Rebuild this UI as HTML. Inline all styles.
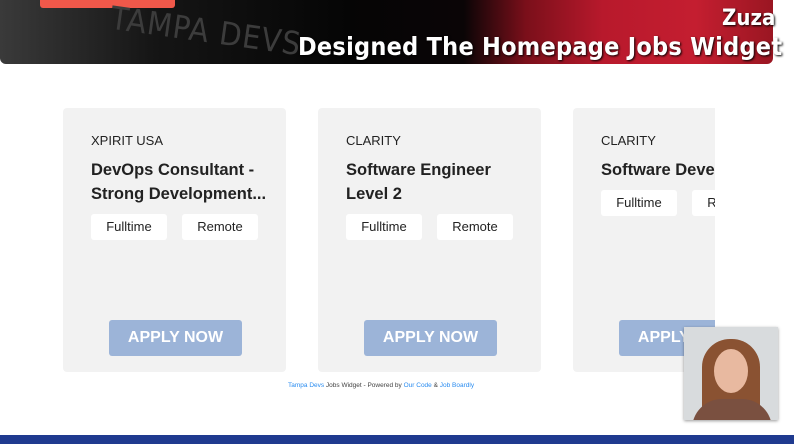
<!DOCTYPE html>
<html><head><meta charset="utf-8"><style>
*{margin:0;padding:0;box-sizing:border-box}
body{width:794px;height:444px;overflow:hidden;background:#fff;font-family:"Liberation Sans",Arial,sans-serif;position:relative}
.banner{position:absolute;left:0;top:0;width:773px;height:64px;border-radius:0 0 6px 6px;overflow:hidden;
background:linear-gradient(90deg,#3a3a3a 0%,#151515 20%,#050505 45%,#0a0506 60%,#7a0f1a 68%,#b8192c 78%,#c41e30 90%,#9a1622 100%)}
.redbtn{position:absolute;left:40px;top:-4px;width:135px;height:12px;background:#f0584a;border-radius:3px}
.tdevs{position:absolute;left:110px;top:12px;color:#3c3c3c;font-size:32px;letter-spacing:1px;transform:rotate(8deg);font-family:"DejaVu Sans Condensed","Liberation Sans",sans-serif}
.h{position:absolute;color:#fff;font-weight:bold;font-family:"DejaVu Sans Condensed","Liberation Sans",sans-serif;text-shadow:1px 1px 2px #000;white-space:nowrap}
.card{position:absolute;top:108px;width:223px;height:264px;background:#f2f2f2;border-radius:4px}
.co{position:absolute;left:28px;top:25px;font-size:13px;color:#222}
.ti{position:absolute;left:28px;top:50px;font-size:16.5px;font-weight:bold;color:#222;line-height:24px;width:190px}
.tag{position:absolute;top:106px;width:76px;height:26px;background:#fff;border-radius:3px;font-size:13px;color:#222;text-align:center;line-height:26px}
.ap{position:absolute;left:46px;top:212px;width:133px;height:36px;background:#9cb4d8;border-radius:3px;color:#fff;font-weight:bold;font-size:16px;text-align:center;line-height:36px}
.foot{position:absolute;left:288px;top:382px;font-size:6.5px;color:#444}
.foot b{color:#2a8cf0;font-weight:normal}
.bar{position:absolute;left:0;top:435px;width:794px;height:9px;background:#1f3a8f}
.photo{position:absolute;left:684px;top:327px;width:94px;height:93px;background:#d8dbdd;box-shadow:0 1px 3px rgba(0,0,0,.4);overflow:hidden}
</style></head><body>
<div class="banner">
<div class="redbtn"></div>
<div class="tdevs">TAMPA DEVS</div>
</div>
<div class="h" style="top:6px;font-size:22px;left:722px">Zuza</div>
<div class="h" style="top:32px;font-size:25px;left:298px;letter-spacing:0.25px">Designed The Homepage Jobs Widget</div>
<div style="position:absolute;left:715px;top:100px;width:79px;height:280px;background:#fff"></div>
<div class="card" style="left:63px"><div class="co">XPIRIT USA</div><div class="ti">DevOps Consultant - Strong Development...</div><div class="tag" style="left:28px">Fulltime</div><div class="tag" style="left:119px">Remote</div><div class="ap">APPLY NOW</div></div>
<div class="card" style="left:318px"><div class="co">CLARITY</div><div class="ti">Software Engineer Level 2</div><div class="tag" style="left:28px">Fulltime</div><div class="tag" style="left:119px">Remote</div><div class="ap">APPLY NOW</div></div>
<div style="position:absolute;left:573px;top:108px;width:142px;height:264px;overflow:hidden">
<div class="card" style="left:0;top:0"><div class="co">CLARITY</div><div class="ti" style="width:300px">Software Developer</div><div class="tag" style="left:28px;top:82px">Fulltime</div><div class="tag" style="left:119px;top:82px">Remote</div><div class="ap">APPLY NOW</div></div></div>
<div class="foot"><b>Tampa Devs</b> Jobs Widget - Powered by <b>Our Code</b> &amp; <b>Job Boardly</b></div>
<div class="photo">
<div style="position:absolute;left:18px;top:12px;width:58px;height:90px;border-radius:28px 28px 6px 6px;background:#8a5232"></div>
<div style="position:absolute;left:8px;top:72px;width:80px;height:40px;border-radius:30px 30px 0 0;background:#7a5040"></div>
<div style="position:absolute;left:30px;top:22px;width:34px;height:44px;border-radius:50%;background:#e8b9a0"></div>
</div>
<div class="bar"></div>
</body></html>
